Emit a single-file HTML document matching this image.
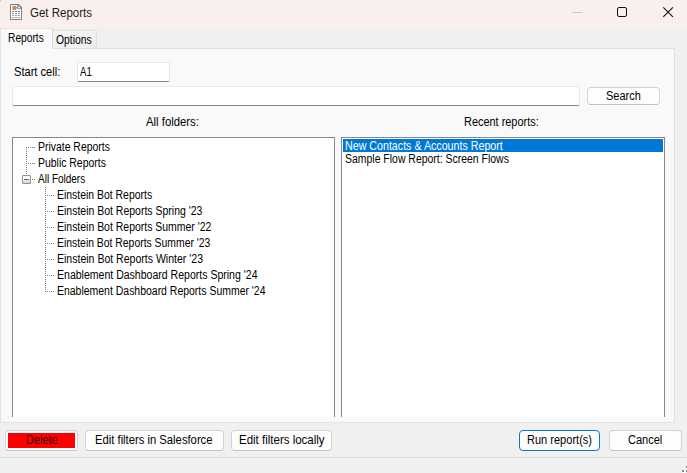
<!DOCTYPE html>
<html><head><meta charset="utf-8">
<style>
*{box-sizing:border-box;margin:0;padding:0}
html,body{width:687px;height:473px;overflow:hidden;background:#f0f0f0;font-family:"Liberation Sans",sans-serif;font-size:11px;color:#000}
.abs{position:absolute}
.tx{position:absolute;z-index:5;transform-origin:0 0;white-space:nowrap;line-height:14px;height:14px}
#title{left:0;top:0;width:687px;height:28px;background:#f9f0ed}
.tab{position:absolute;border:1px solid #dedede;border-bottom:none;background:#f0f0f0}
#tab1{left:0;top:28px;width:53px;height:21px;background:#f9f9f9;z-index:3;border-color:#e5e5e5 #dcdcdc #e5e5e5 #e5e5e5}
#tab2{left:52px;top:30px;width:45px;height:18px;background:#f1f1f1;border-color:#e3e3e3}
#page{left:0;top:48px;width:675px;height:375px;background:#f9f9f9;border:1px solid #e2e2e2}
.inp{position:absolute;background:#fff;border:1px solid #e8e8e8;border-bottom:1px solid #858585;border-radius:2px}
.box{position:absolute;background:#fff;border:1px solid #828790;border-bottom:none}
.btn{position:absolute;background:#fdfdfd;border:1px solid #d2d2d2;border-bottom-color:#c2c2c2;border-radius:4px}
.dh{position:absolute;height:1px;background-image:repeating-linear-gradient(90deg,#808080 0 1px,transparent 1px 2px)}
.dv{position:absolute;width:1px;background-image:repeating-linear-gradient(180deg,#808080 0 1px,transparent 1px 2px)}
</style></head><body>
<div id="title" class="abs">
<svg class="abs" style="left:9px;top:3px" width="15" height="18" viewBox="0 0 15 18"><path d="M1.500 1.500H9.300L12.500 4.700V16.500H1.500z" fill="#fff" stroke="#7d7d7d"/><path d="M8.700 1.500V5.300H12.500" fill="none" stroke="#7d7d7d"/><path d="M9 1.200L12.800 5" fill="none" stroke="#7d7d7d" stroke-width="1.300"/><circle cx="5.300" cy="4.800" r="2.300" fill="#9aa0a8"/><path d="M3.670 6.430A2.300 2.300 0 0 0 6.930 3.170Z" fill="#f47a14"/><path d="M3 8.500h2M6 8.500h2M9 8.500h2" stroke="#4a7ab5"/><path d="M3 10.500h2M6 10.500h2M9 10.500h2M3 12.500h2M6 12.500h2M9 12.500h2M3 14.500h2M6 14.500h2M9 14.500h2" stroke="#999"/></svg>
<svg class="abs" style="left:0;top:0" width="4" height="4" viewBox="0 0 4 4"><path d="M0 0H2.600A2.600 3.400 0 0 0 0 3.400Z" fill="#c4c4c4"/></svg>
<svg class="abs" style="left:560px;top:0" width="127" height="28" viewBox="0 0 127 28"><path d="M12 12.500h10" stroke="#cdc5c3"/><rect x="57.500" y="7.500" width="9" height="9" rx="1.500" fill="none" stroke="#111"/><path d="M103.300 7.300l9.600 9.600M112.900 7.300l-9.600 9.600" stroke="#111" stroke-width="1.100"/></svg>
</div>
<div id="page" class="abs"></div>
<div id="tab1" class="tab"></div>
<div id="tab2" class="tab"></div>

<div class="inp" style="left:77px;top:62px;width:93px;height:20px"></div>
<div class="inp" style="left:12px;top:86px;width:568px;height:20px"></div>
<div class="btn" style="left:587px;top:87px;width:73px;height:18px"></div>

<div class="box" style="left:12px;top:137px;width:323px;height:280px"></div>
<div class="box" style="left:341px;top:137px;width:324px;height:280px"></div>

<!-- tree lines -->
<div class="dv" style="left:26px;top:147px;height:28px"></div>
<div class="dh" style="left:26px;top:147px;width:9px"></div>
<div class="dh" style="left:26px;top:163px;width:9px"></div>
<div class="dh" style="left:32px;top:179px;width:3px"></div>
<div class="abs" style="left:22px;top:175px;width:9px;height:9px;border:1px solid #919191;border-radius:1px;background:linear-gradient(#fff 30%,#d4d4d4)"></div>
<div class="abs" style="left:24px;top:179px;width:5px;height:1px;background:#4b63a7"></div>
<div class="dv" style="left:45px;top:187px;height:105px"></div>
<div class="dh" style="left:45px;top:195px;width:9px"></div>
<div class="dh" style="left:45px;top:211px;width:9px"></div>
<div class="dh" style="left:45px;top:227px;width:9px"></div>
<div class="dh" style="left:45px;top:243px;width:9px"></div>
<div class="dh" style="left:45px;top:259px;width:9px"></div>
<div class="dh" style="left:45px;top:275px;width:9px"></div>
<div class="dh" style="left:45px;top:291px;width:9px"></div>

<div class="abs" style="left:343px;top:139px;width:320px;height:13px;background:#0078d7"></div>

<div class="abs" style="left:0;top:423px;width:687px;height:50px;background:#f0f0f0"></div>
<div class="btn" style="left:5px;top:430px;width:73px;height:21px"><div class="abs" style="left:2px;top:2px;width:67px;height:15px;background:#ff0000"></div></div>
<div class="btn" style="left:85px;top:430px;width:139px;height:21px"></div>
<div class="btn" style="left:231px;top:430px;width:101px;height:21px"></div>
<div class="btn" style="left:519px;top:430px;width:81px;height:21px;border-color:#0a74d0"></div>
<div class="btn" style="left:609px;top:430px;width:73px;height:21px"></div>
<div class="abs" style="left:0;top:457px;width:687px;height:1px;background:#dcdcdc"></div>
<div class="abs" style="left:682px;top:470px;width:2px;height:2px;background:#8a8a8a;box-shadow:1px 1px 0 #fff"></div>
<div class="abs" style="left:686px;top:470px;width:2px;height:2px;background:#8a8a8a"></div>
<div class="abs" style="left:686px;top:466px;width:2px;height:2px;background:#8a8a8a"></div>
<div class="tx" style="left:29.7px;top:5.54px;font-size:12px;transform:scaleX(0.9582);color:#1b1b1b">Get Reports</div>
<div class="tx" style="left:8.0px;top:30.84px;font-size:12px;transform:scaleX(0.8517);color:#000">Reports</div>
<div class="tx" style="left:55.8px;top:32.84px;font-size:12px;transform:scaleX(0.8656);color:#000">Options</div>
<div class="tx" style="left:13.5px;top:64.84px;font-size:12px;transform:scaleX(0.9257);color:#000">Start cell:</div>
<div class="tx" style="left:79.7px;top:64.84px;font-size:12px;transform:scaleX(0.8034);color:#000">A1</div>
<div class="tx" style="left:146.4px;top:114.84px;font-size:12px;transform:scaleX(0.9441);color:#000">All folders:</div>
<div class="tx" style="left:464.1px;top:114.84px;font-size:12px;transform:scaleX(0.9105);color:#000">Recent reports:</div>
<div class="tx" style="left:605.6px;top:88.84px;font-size:12px;transform:scaleX(0.9150);color:#000">Search</div>
<div class="tx" style="left:37.9px;top:139.84px;font-size:12px;transform:scaleX(0.8694);color:#000">Private Reports</div>
<div class="tx" style="left:37.9px;top:155.84px;font-size:12px;transform:scaleX(0.8700);color:#000">Public Reports</div>
<div class="tx" style="left:37.9px;top:171.84px;font-size:12px;transform:scaleX(0.8326);color:#000">All Folders</div>
<div class="tx" style="left:56.9px;top:187.84px;font-size:12px;transform:scaleX(0.8694);color:#000">Einstein Bot Reports</div>
<div class="tx" style="left:56.9px;top:203.84px;font-size:12px;transform:scaleX(0.8738);color:#000">Einstein Bot Reports Spring &#x27;23</div>
<div class="tx" style="left:56.9px;top:219.84px;font-size:12px;transform:scaleX(0.8721);color:#000">Einstein Bot Reports Summer &#x27;22</div>
<div class="tx" style="left:56.9px;top:235.84px;font-size:12px;transform:scaleX(0.8659);color:#000">Einstein Bot Reports Summer &#x27;23</div>
<div class="tx" style="left:56.9px;top:251.84px;font-size:12px;transform:scaleX(0.8775);color:#000">Einstein Bot Reports Winter &#x27;23</div>
<div class="tx" style="left:56.9px;top:267.84px;font-size:12px;transform:scaleX(0.8777);color:#000">Enablement Dashboard Reports Spring &#x27;24</div>
<div class="tx" style="left:56.9px;top:283.84px;font-size:12px;transform:scaleX(0.8720);color:#000">Enablement Dashboard Reports Summer &#x27;24</div>
<div class="tx" style="left:345.0px;top:138.84px;font-size:12px;transform:scaleX(0.8894);color:#fff">New Contacts &amp; Accounts Report</div>
<div class="tx" style="left:345.0px;top:151.84px;font-size:12px;transform:scaleX(0.8714);color:#000">Sample Flow Report: Screen Flows</div>
<div class="tx" style="left:25.9px;top:432.84px;font-size:12px;transform:scaleX(0.9139);color:#400000">Delete</div>
<div class="tx" style="left:94.9px;top:432.84px;font-size:12px;transform:scaleX(0.9371);color:#000">Edit filters in Salesforce</div>
<div class="tx" style="left:238.7px;top:432.84px;font-size:12px;transform:scaleX(0.9578);color:#000">Edit filters locally</div>
<div class="tx" style="left:526.9px;top:432.84px;font-size:12px;transform:scaleX(0.9195);color:#000">Run report(s)</div>
<div class="tx" style="left:627.7px;top:432.84px;font-size:12px;transform:scaleX(0.9181);color:#000">Cancel</div>
</body></html>
